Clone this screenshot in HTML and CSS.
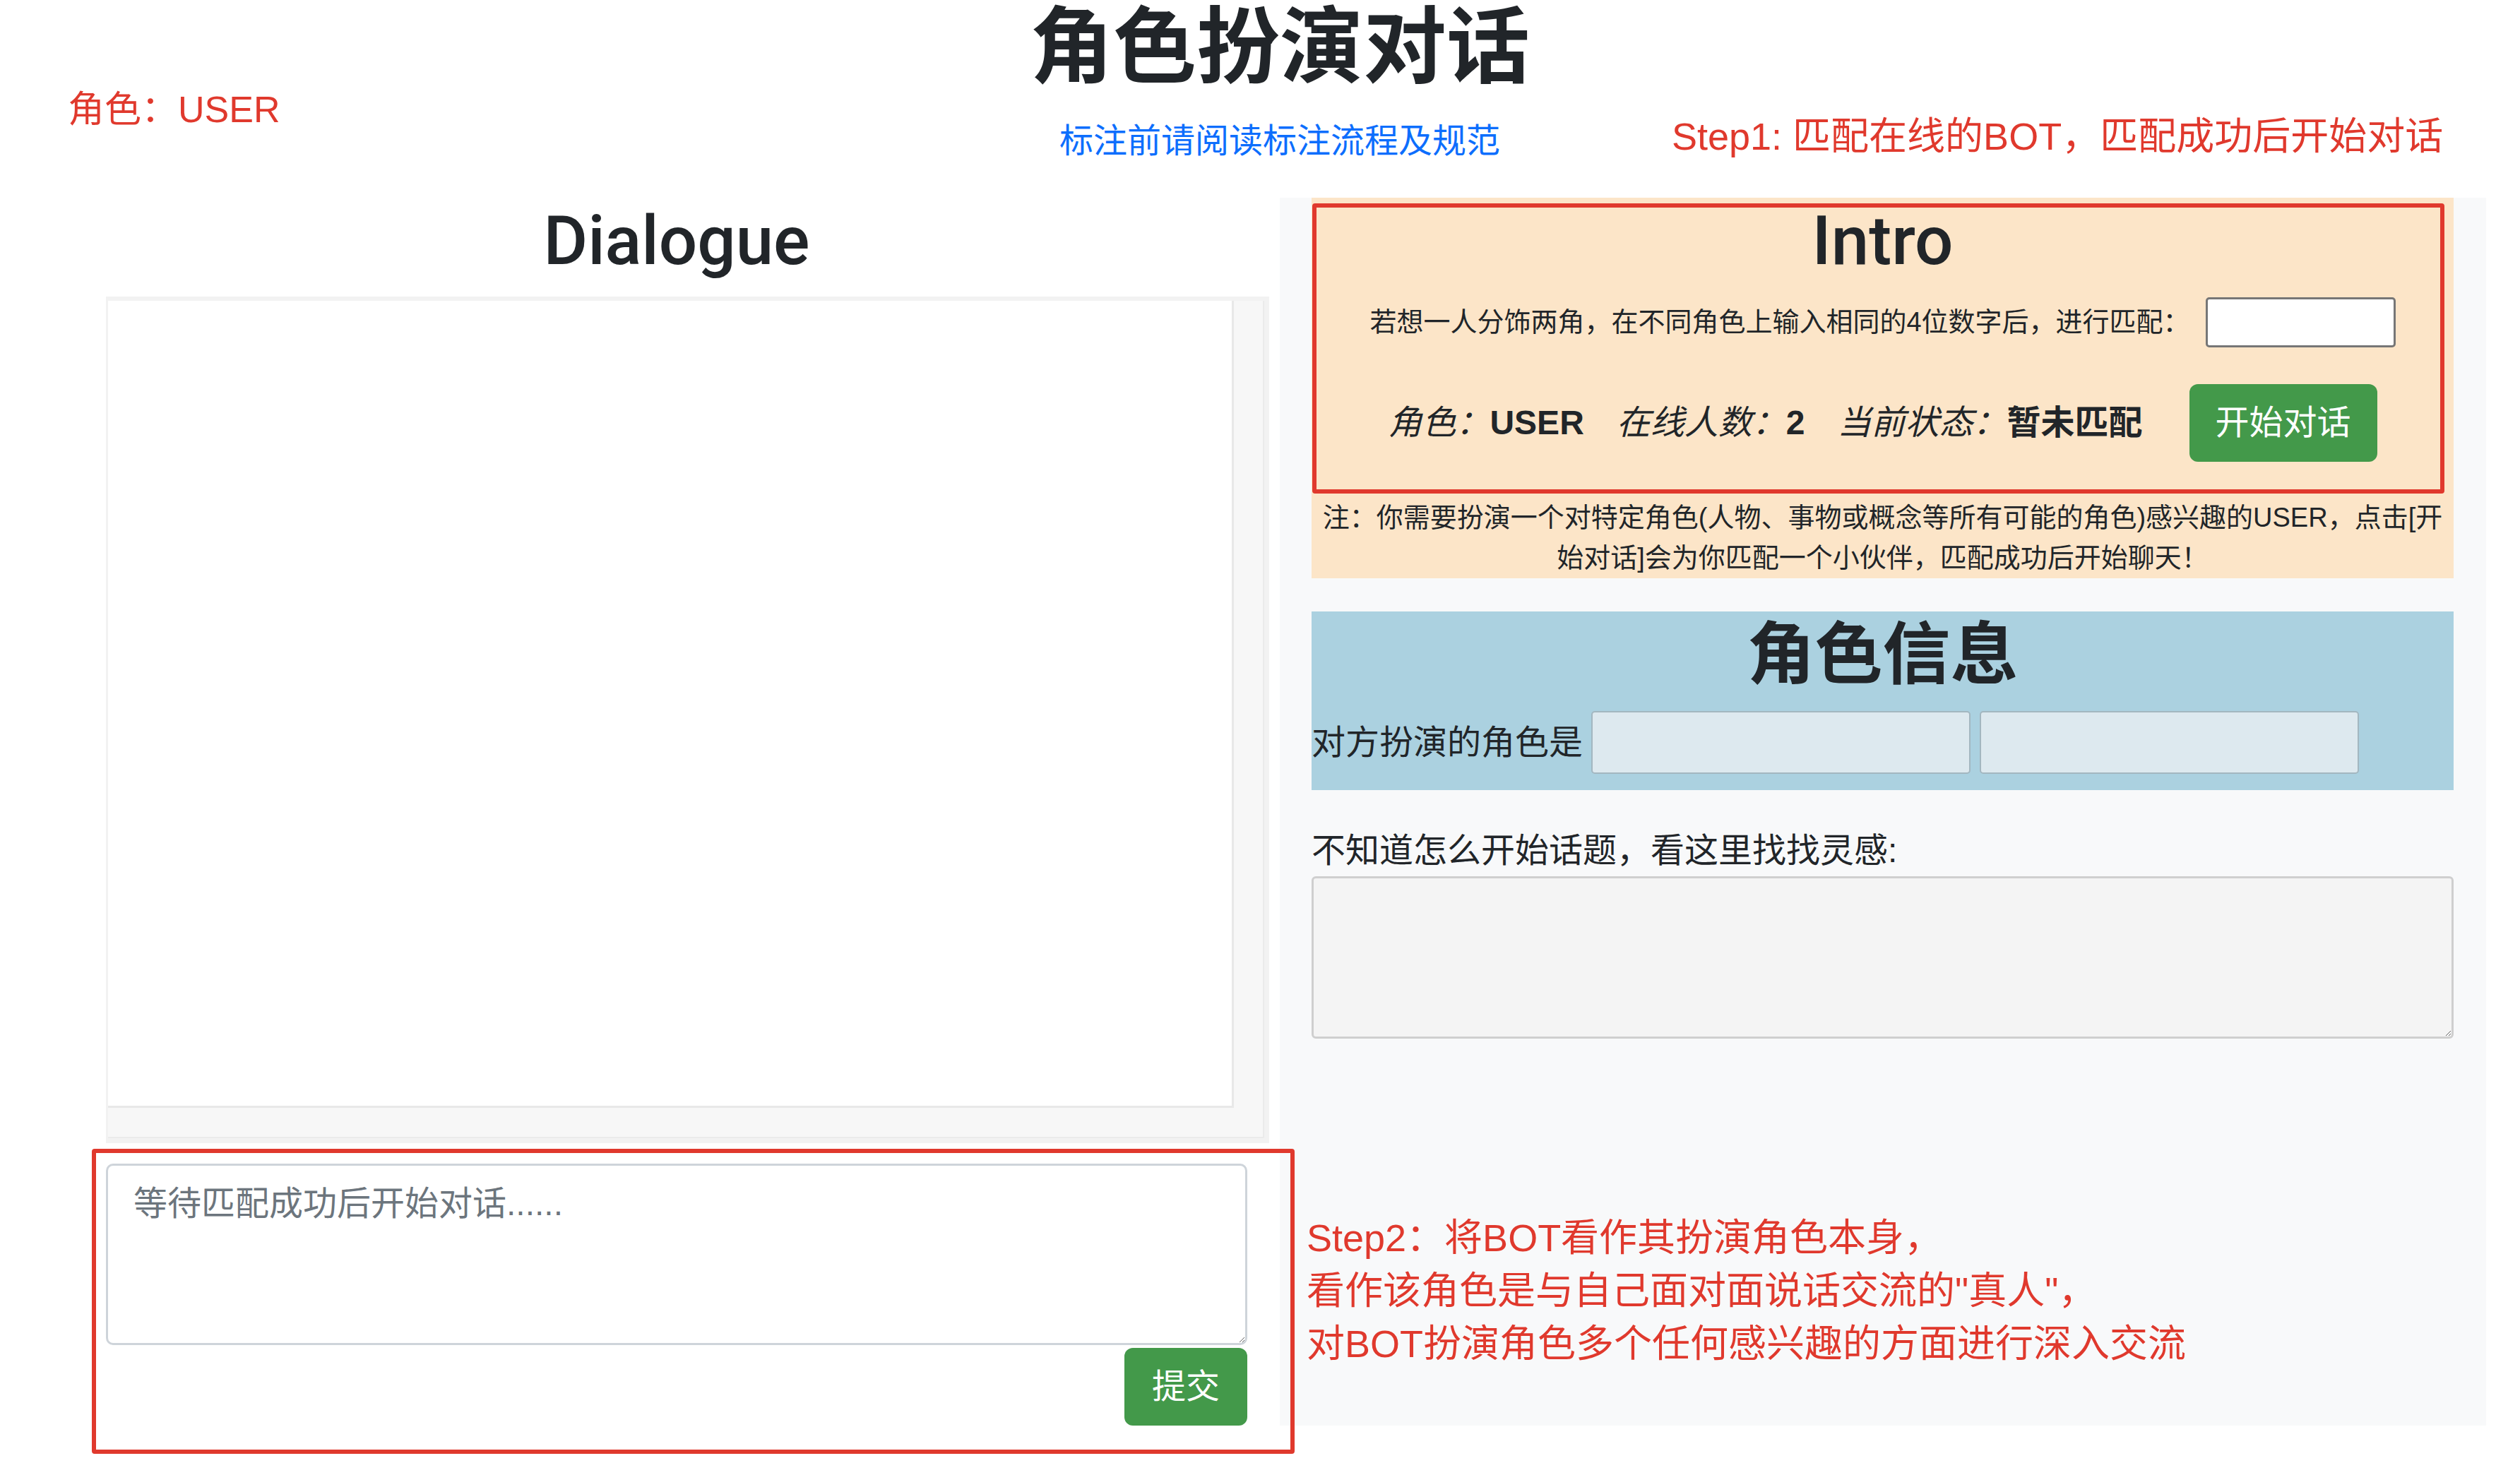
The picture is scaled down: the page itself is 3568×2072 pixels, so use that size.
FILE: index.html
```html
<!DOCTYPE html>
<html lang="zh-CN">
<head>
<meta charset="utf-8">
<title>角色扮演对话</title>
<link rel="stylesheet" href="styles.css">
</head>
<body>
<div class="container">
  <header class="header">
    <h1 class="title">角色扮演对话</h1>
    <a class="guide-link" href="#">标注前请阅读标注流程及规范</a>
  </header>
  <main class="main-row">
    <section class="col col-left">
      <h2 class="col-heading">Dialogue</h2>
      <div class="chat-area">
        <div class="chat-frame">
          <div class="chat-body"></div>
          <div class="track track-v"></div>
          <div class="track track-h"></div>
          <div class="track track-corner"></div>
        </div>
        <textarea class="msg-input" placeholder="等待匹配成功后开始对话......"></textarea>
        <div class="submit-row"><button class="btn">提交</button></div>
      </div>
    </section>
    <section class="col col-right">
      <div class="intro">
        <h2 class="col-heading">Intro</h2>
        <p class="intro-line"><span>若想一人分饰两角，在不同角色上输入相同的4位数字后，进行匹配：</span><input class="code-input" type="text"></p>
        <div class="status-row">
          <span class="status-item"><i>角色：</i><b>USER</b></span>
          <span class="status-item"><i>在线人数：</i><b>2</b></span>
          <span class="status-item"><i>当前状态：</i><b>暂未匹配</b></span>
          <button class="btn btn-start">开始对话</button>
        </div>
        <p class="intro-note">注：你需要扮演一个对特定角色(人物、事物或概念等所有可能的角色)感兴趣的USER，点击[开始对话]会为你匹配一个小伙伴，匹配成功后开始聊天！</p>
      </div>
      <div class="role-info">
        <h2 class="col-heading cjk-heading">角色信息</h2>
        <div class="role-row">
          <span class="role-label">对方扮演的角色是</span>
          <input class="role-input" type="text" disabled>
          <input class="role-input" type="text" disabled>
        </div>
      </div>
      <label class="idea-label">不知道怎么开始话题，看这里找找灵感:</label>
      <textarea class="idea-box"></textarea>
    </section>
  </main>
</div>
<div class="anno anno-role">角色：USER</div>
<div class="anno anno-step1">Step1: 匹配在线的BOT，匹配成功后开始对话</div>
<div class="anno anno-step2">Step2：将BOT看作其扮演角色本身，<br>看作该角色是与自己面对面说话交流的"真人"，<br>对BOT扮演角色多个任何感兴趣的方面进行深入交流</div>
<div class="mark mark-input"></div>
<div class="mark mark-intro"></div>
</body>
</html>
```
FILE: styles.css
```css
html, body {
  margin: 0;
  padding: 0;
}

body {
  position: relative;
  width: 3568px;
  height: 2072px;
  overflow: hidden;
  background: #ffffff;
  color: #212529;
  font-family: "Liberation Sans", "Noto Sans CJK SC", sans-serif;
  font-size: 48px;
  line-height: 1.5;
}

.container {
  margin-left: 104px;
  width: 3416px;
}

/* header */
.header {
  height: 280px;
  box-sizing: border-box;
  text-align: center;
}

.title {
  margin: 0;
  font-size: 118px;
  line-height: 1.15;
  font-weight: 700;
}

.guide-link {
  display: block;
  margin-top: 28px;
  color: #0d6efd;
  text-decoration: none;
  font-size: 48px;
  line-height: 72px;
}

/* main */
.main-row {
  display: flex;
}

.col {
  width: 1708px;
  box-sizing: border-box;
}

.col-heading {
  margin: 0 0 21px;
  padding-top: 4px;
  font-family: Roboto, "Noto Sans CJK SC", sans-serif;
  font-size: 96px;
  line-height: 1.2;
  font-weight: 500;
  text-align: center;
}

.cjk-heading {
  font-weight: 700;
  margin-bottom: 22px;
}

/* left column */
.chat-area {
  padding-left: 46px;
}

.chat-frame {
  width: 1647px;
  height: 1199px;
  box-sizing: border-box;
  padding: 6px 7px 7px 3px;
  background: #f2f2f2;
  display: grid;
  grid-template-columns: 1fr 43px;
  grid-template-rows: 1fr 43px;
}

.chat-body {
  background: #ffffff;
  border-right: 3px solid #e8e8e8;
  border-bottom: 3px solid #e8e8e8;
}

.track {
  background: #f7f7f7;
}

.track-v {
  border-right: 2px solid #ebebeb;
}

.track-h {
  border-bottom: 2px solid #ebebeb;
}

.track-corner {
  border-right: 2px solid #ebebeb;
  border-bottom: 2px solid #ebebeb;
}

.msg-input {
  display: block;
  box-sizing: border-box;
  width: 1616px;
  height: 257px;
  margin: 29px 0 0;
  padding: 18px 36px;
  border: 3px solid #ced4da;
  border-radius: 10px;
  background: #ffffff;
  color: #212529;
  font-family: "Liberation Sans", "Noto Sans CJK SC", sans-serif;
  font-size: 48px;
  line-height: 1.5;
  resize: vertical;
}

.msg-input::placeholder {
  color: #6c757d;
}

.submit-row {
  width: 1616px;
  display: flex;
  justify-content: flex-end;
  margin-top: 4px;
}

.btn {
  font-family: "Liberation Sans", "Noto Sans CJK SC", sans-serif;
  font-size: 48px;
  line-height: 72px;
  padding: 16px 36px;
  border: 3px solid transparent;
  border-radius: 12px;
  background: #43994a;
  color: #ffffff;
}

/* right column */
.col-right {
  background: #f8f9fa;
  padding: 0 46px 0 45px;
}

.intro {
  background: #fce5c8;
}

.intro .col-heading {
  margin-bottom: 22px;
}

.intro-line {
  display: flex;
  justify-content: center;
  align-items: center;
  gap: 22px;
  height: 71px;
  margin: 0 0 52px;
  font-size: 38px;
}

.code-input {
  width: 269px;
  height: 71px;
  box-sizing: border-box;
  border: 3px solid #767676;
  border-radius: 5px;
  background: #ffffff;
}

.status-row {
  display: flex;
  justify-content: center;
  align-items: center;
  gap: 46px;
  margin-bottom: 51px;
}

.status-item b {
  font-weight: 700;
}

.btn-start {
  margin-left: 20px;
  padding: 16px 34px;
}

.intro-note {
  margin: 0;
  padding: 0 12px;
  font-size: 38px;
  line-height: 57px;
  text-align: center;
}

.role-info {
  margin-top: 47px;
  padding-bottom: 23px;
  background: #abd1e0;
}

.role-row {
  display: flex;
  align-items: center;
  height: 89px;
}

.role-label {
  margin-right: 12px;
}

.role-input {
  width: 537px;
  height: 89px;
  box-sizing: border-box;
  margin: 0 13px 0 0;
  border: 2px solid #a3b7c0;
  border-radius: 5px;
  background: #dde9ef;
}

.idea-label {
  display: block;
  margin-top: 50px;
  font-size: 48px;
  line-height: 72px;
}

.idea-box {
  display: block;
  box-sizing: border-box;
  width: 100%;
  height: 230px;
  margin: 0;
  border: 3px solid #cfcfcf;
  border-radius: 6px;
  background: #f4f4f4;
}

/* annotations drawn over the page */
.anno {
  position: absolute;
  color: #e0392d;
  font-family: "Liberation Sans", "Noto Sans CJK SC", sans-serif;
  white-space: nowrap;
}

.anno-role {
  left: 96px;
  top: 124px;
  font-size: 52px;
  line-height: 62px;
}

.anno-step1 {
  left: 2367px;
  top: 161px;
  font-size: 54px;
  line-height: 64px;
}

.anno-step2 {
  left: 1850px;
  top: 1716px;
  font-size: 54px;
  line-height: 75px;
}

.mark {
  position: absolute;
  box-sizing: border-box;
  border: 6px solid #e0392d;
  border-radius: 4px;
}

.mark-input {
  left: 130px;
  top: 1627px;
  width: 1703px;
  height: 432px;
}

.mark-intro {
  left: 1858px;
  top: 288px;
  width: 1603px;
  height: 411px;
}
```
